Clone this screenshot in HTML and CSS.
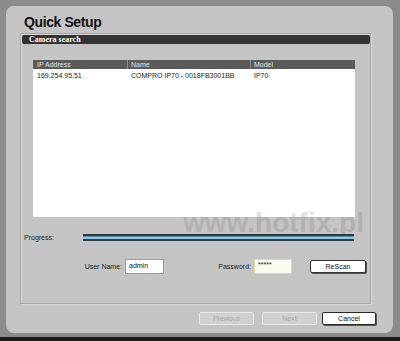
FILE: index.html
```html
<!DOCTYPE html>
<html>
<head>
<meta charset="utf-8">
<link rel="stylesheet" href="styles.css">
</head>
<body>
<div class="desk">
  <div class="dialog">
    <h1 class="title">Quick Setup</h1>
    <div class="panel">
      <div class="bar">Camera search</div>
      <div class="table">
        <div class="thead">
          <div class="c1">IP Address</div>
          <div class="c2">Name</div>
          <div class="c3">Model</div>
        </div>
        <div class="trow">
          <div class="c1">169.254.95.51</div>
          <div class="c2">COMPRO IP70 - 0018FB3001BB</div>
          <div class="c3">IP70</div>
        </div>
      </div>
      <div class="progress-row">
        <span class="plabel">Progress:</span>
        <div class="pbar"><div class="pfill"></div></div>
      </div>
      <div class="cred-row">
        <span class="lbl lbl-user">User Name:</span>
        <div class="input user">admin</div>
        <span class="lbl lbl-pass">Password:</span>
        <div class="input pass">*****</div>
        <div class="btn rescan">ReScan</div>
      </div>
    </div>
    <div class="actions">
      <div class="btn disabled prev">Previous</div>
      <div class="btn disabled next">Next</div>
      <div class="btn cancel">Cancel</div>
    </div>
    <div class="watermark">www.hotfix.pl</div>
  </div>
</div>
<div class="strip"></div>
</body>
</html>
```

FILE: styles.css
```css
html, body {
  margin: 0;
  padding: 0;
}
body {
  width: 400px;
  height: 341px;
  background: #8b8b8b;
  font-family: "Liberation Sans", Arial, sans-serif;
  overflow: hidden;
}
.desk {
  height: 337px;
  padding-top: 6px;
  box-sizing: border-box;
}
.strip {
  height: 4px;
  background: #1c1c1c;
}
.dialog {
  position: relative;
  margin-left: 6px;
  width: 387px;
  height: 327px;
  background: #c4c4c4;
  border-radius: 8px;
  box-sizing: border-box;
  padding-top: 8px;
}
.title {
  margin: 0 0 0 18px;
  font-size: 14px;
  line-height: 16px;
  font-weight: bold;
  color: #111;
  letter-spacing: -0.4px;
  height: 16px;
}
.panel {
  margin: 3px 0 0 14px;
  width: 351px;
  height: 271px;
  box-sizing: border-box;
  border: 1px solid #a8a8a8;
  box-shadow: 1px 1px 0 #d6d6d6, inset 1px 1px 0 #d6d6d6;
}
.bar {
  margin: 1px 0 0 1px;
  width: 348px;
  height: 9px;
  background: #333333;
  border-radius: 2px;
  color: #fff;
  font-family: "Liberation Serif", "Times New Roman", serif;
  font-weight: bold;
  font-size: 8px;
  line-height: 9px;
  padding-left: 7px;
  box-sizing: border-box;
}
.table {
  margin: 16px 0 0 12px;
  width: 322px;
  height: 157px;
  background: #fff;
  font-size: 7px;
}
.thead, .trow {
  display: flex;
}
.thead {
  height: 9px;
  line-height: 9px;
  background: #5a5a5a;
  color: #e6e6e6;
}
.trow {
  height: 12px;
  line-height: 14px;
  color: #1a1a1a;
}
.c1 { width: 94px; padding-left: 4px; box-sizing: border-box; }
.c2 { width: 123px; padding-left: 3px; box-sizing: border-box; }
.c3 { width: 105px; padding-left: 3px; box-sizing: border-box; }
.thead .c2, .thead .c3 {
  border-left: 1px solid #8a8a8a;
}
.trow .c2, .trow .c3 {
  border-left: 1px solid transparent;
}
.progress-row {
  display: flex;
  align-items: center;
  margin: 16px 0 0 3px;
  height: 8px;
}
.plabel {
  width: 59px;
  font-size: 7px;
  color: #1a1a1a;
}
.pbar {
  position: relative;
  z-index: 2;
  width: 271px;
  height: 7px;
  background: #2e3a40;
  box-sizing: border-box;
  padding-top: 2px;
}
.pfill {
  height: 2px;
  background: #8ccbe6;
  border-top: 1px solid #5d8da0;
}
.cred-row {
  display: flex;
  align-items: center;
  margin: 17px 0 0 0;
  height: 16px;
  font-size: 7px;
  color: #1a1a1a;
}
.lbl {
  text-align: right;
}
.lbl-user {
  width: 101px;
}
.lbl-pass {
  width: 50px;
  margin-left: 37px;
}
.input {
  margin-left: 3px;
  height: 15px;
  box-sizing: border-box;
  padding: 2px 0 0 3px;
  font-size: 7px;
  line-height: 8px;
  color: #111;
}
.user {
  width: 39px;
  background: #fff;
  border: 1px solid #9a9a9a;
}
.pass {
  width: 38px;
  background: #fbfbee;
  border: 1px solid #dadba0;
  line-height: 6px;
}
.btn {
  height: 13px;
  box-sizing: border-box;
  border-radius: 2px;
  font-size: 7px;
  line-height: 11px;
  text-align: center;
}
.rescan {
  margin-left: 18px;
  width: 56px;
  background: #fff;
  border: 1px solid #333;
  box-shadow: 1px 1px 0 #555;
  color: #111;
}
.actions {
  display: flex;
  justify-content: flex-end;
  margin: 8px 17px 0 0;
}
.prev { width: 55px; }
.next { width: 55px; margin-left: 8px; }
.cancel {
  width: 54px;
  margin-left: 5px;
  background: #fff;
  border: 1px solid #2a2a2a;
  box-shadow: 1px 1px 0 #555;
  color: #111;
}
.disabled {
  background: #d0d0d0;
  border: 1px solid #e8e8e8;
  color: #a6a6a6;
}
.watermark {
  position: absolute;
  left: 177px;
  top: 203px;
  font-size: 28px;
  line-height: 28px;
  font-weight: bold;
  color: rgba(110, 110, 110, 0.24);
  white-space: nowrap;
  z-index: 1;
}
```
